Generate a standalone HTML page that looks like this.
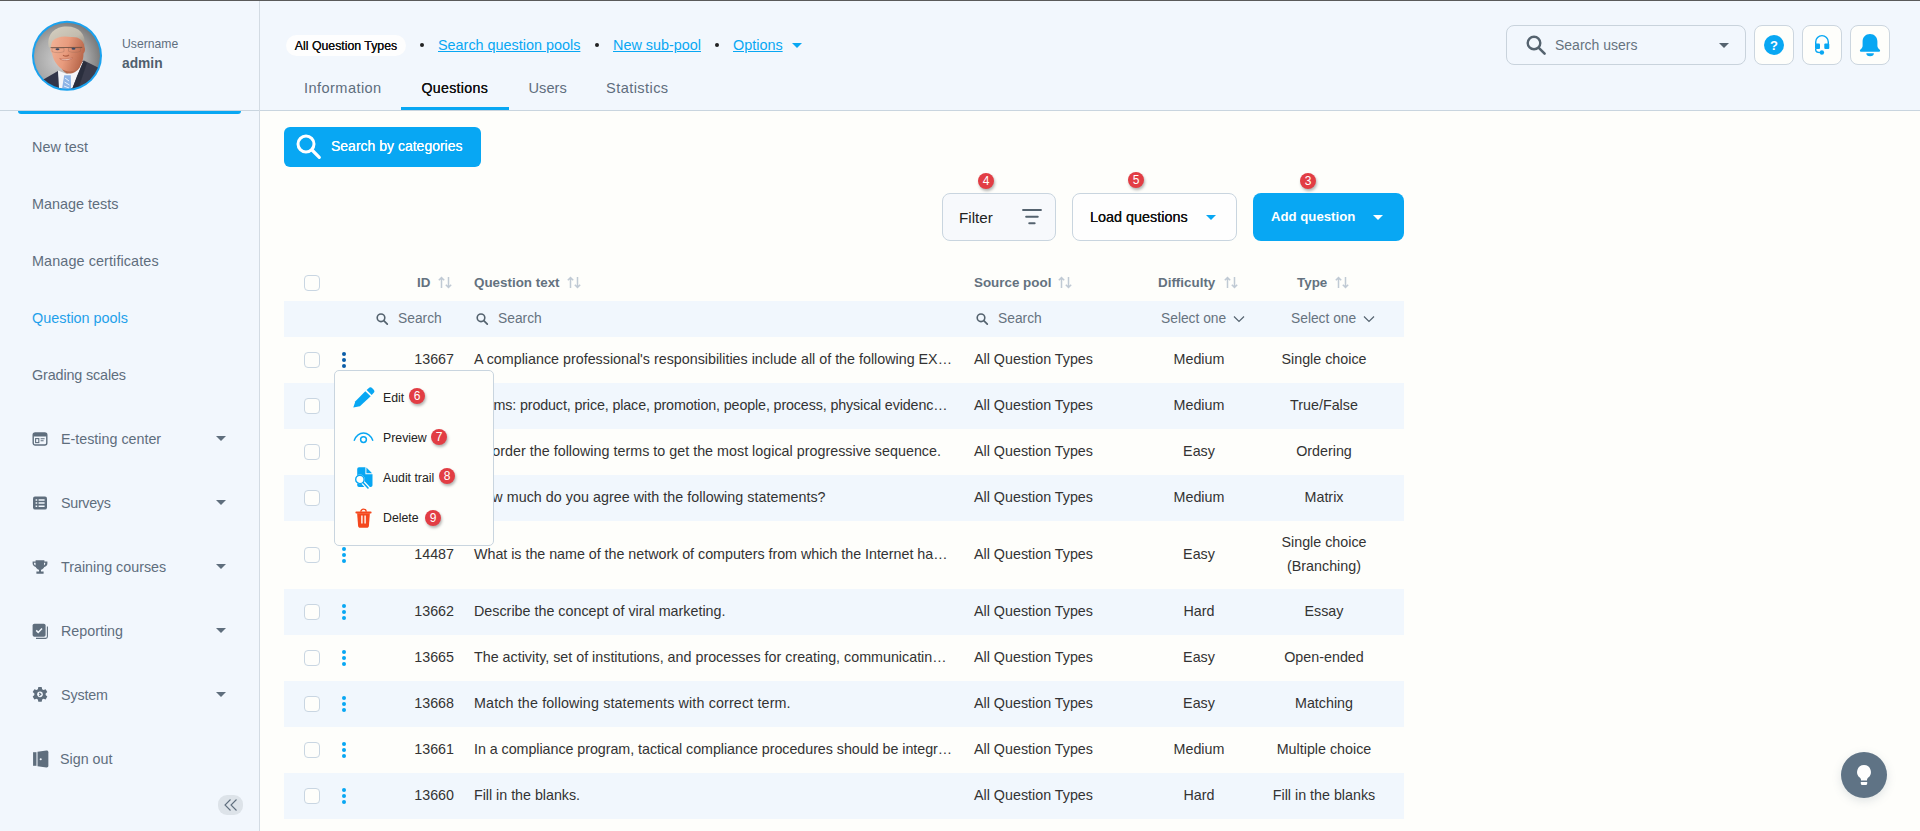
<!DOCTYPE html>
<html lang="en">
<head>
<meta charset="utf-8">
<title>Question pools</title>
<style>
*{box-sizing:border-box;margin:0;padding:0}
html,body{width:1920px;height:831px;overflow:hidden}
body{font-family:"Liberation Sans",sans-serif;font-size:14px;color:#333;background:#fefefb;position:relative}
.abs{position:absolute}
.topline{left:0;top:0;width:1920px;height:1px;background:#5a5a5a;z-index:50}
/* sidebar */
#side{left:0;top:0;width:260px;height:831px;background:#f2f7fd;border-right:1px solid #d3dbe3}
#head{left:260px;top:0;width:1660px;height:111px;background:#f2f7fd;border-bottom:1px solid #c9d5df}
#sidehead{left:0;top:0;width:259px;height:111px;border-bottom:1px solid #c9d5df}
.blueline{left:18px;top:111px;width:223px;height:3px;background:#08a7f3;border-radius:0 0 6px 6px}
.uname{left:122px;top:37px;font-size:12.2px;color:#5f6e7d;line-height:14px}
.admin{left:122px;top:56px;font-size:13.8px;font-weight:700;color:#505f6e;line-height:16px}
.mi{left:32px;font-size:14.4px;color:#5f6e7d;line-height:18px;white-space:nowrap}
.mi.act{color:#1fa0ea}
.gi{left:61px;font-size:14.3px;color:#5f6e7d;line-height:18px;white-space:nowrap}
.caret{width:0;height:0;border-left:5px solid transparent;border-right:5px solid transparent;border-top:5px solid #5f6e7d}
.ico{left:32px;width:16px;height:16px}
/* header */
.pill{left:286px;top:35px;width:120px;height:21px;background:#fefefe;border-radius:11px;font-size:12.3px;color:#111;text-align:center;line-height:23px;white-space:nowrap;text-shadow:0 0 .15px #111}
.bl{top:35px;font-size:14.4px;color:#08a7f3;text-decoration:underline;line-height:20px;white-space:nowrap}
.dot{top:43px;width:4px;height:4px;border-radius:50%;background:#222}
.tab{top:78px;font-size:14.6px;letter-spacing:.42px;color:#5f6e7d;line-height:20px;white-space:nowrap}
.tab.on{color:#111;text-shadow:0 0 .4px #111;font-size:14.2px;letter-spacing:.3px;margin-left:.5px}
.tabline{left:401px;top:107px;width:108px;height:3px;background:#08a7f3}
.sbox{left:1506px;top:25px;width:240px;height:40px;border:1px solid #c9d3dc;border-radius:8px;background:#f2f7fd}
.ibtn{top:25px;width:40px;height:40px;border:1px solid #ccd6df;border-radius:8px;background:#fefefb}
/* toolbar */
.sbc{left:284px;top:127px;width:197px;height:40px;background:#08a7f3;border-radius:6px;color:#fff;font-size:14px;text-shadow:0 0 .5px #fff}
.btn{top:193px;height:48px;border:1px solid #c9d5df;border-radius:8px;white-space:nowrap}
.badge{width:16px;height:16px;border-radius:50%;background:#e23d44;color:#fff;font-size:12px;line-height:16px;text-align:center;box-shadow:1px 2px 3px rgba(0,0,0,.3)}
/* table */
.cb{left:304px;width:16px;height:16px;border:1px solid #c9d6e2;border-radius:4px;background:#fefefb}
.th{top:274px;font-size:13.4px;font-weight:700;color:#64727f;line-height:18px;white-space:nowrap}
.row{left:284px;width:1120px;background:#f1f7fd}
.frow{left:284px;top:301px;width:1120px;height:36px;background:#f1f7fd}
.ft{top:310px;font-size:13.8px;color:#66737f;line-height:18px;white-space:nowrap}
.td{font-size:14.3px;color:#333;line-height:18px;white-space:nowrap}
.c{text-align:center}
.r{text-align:right}
.kb{left:341px;width:6px;height:18px}
/* popup */
#pop{left:334px;top:370px;width:160px;height:176px;background:#fefefb;border:1px solid #c9d5df;border-radius:5px;z-index:10}
.pi{left:47px;font-size:12.3px;color:#222;line-height:16px;white-space:nowrap}
</style>
</head>
<body>
<div class="abs" id="side"></div>
<div class="abs" id="head"></div>
<div class="abs" id="sidehead"></div>
<div class="abs topline"></div>
<!-- avatar -->
<svg class="abs" style="left:31px;top:20px" width="72" height="72" viewBox="0 0 72 72">
<defs><clipPath id="av"><circle cx="36" cy="35.800" r="33"/></clipPath>
<radialGradient id="avbg" cx=".42" cy=".55" r=".62"><stop offset="0" stop-color="#cfcfcf"/><stop offset=".55" stop-color="#a9a9a9"/><stop offset="1" stop-color="#6a6a6a"/></radialGradient>
<linearGradient id="skin" x1="0" y1="0" x2="1" y2=".3"><stop offset="0" stop-color="#f2b59a"/><stop offset=".55" stop-color="#e89b7d"/><stop offset="1" stop-color="#bb6a4e"/></linearGradient>
<linearGradient id="hair" x1="0" y1="0" x2="1" y2="1"><stop offset="0" stop-color="#d6d0c2"/><stop offset=".6" stop-color="#c3bcae"/><stop offset="1" stop-color="#8f897f"/></linearGradient>
<filter id="sf" x="-10%" y="-10%" width="120%" height="120%"><feGaussianBlur stdDeviation=".55"/></filter></defs>
<circle cx="36" cy="35.800" r="35" fill="#1aa2ef"/>
<g clip-path="url(#av)"><g filter="url(#sf)">
<rect width="72" height="72" fill="url(#avbg)"/>
<path d="M44 44L53 40.500 67 47.500 72 60V72H40Z" fill="#3b3e4d"/>
<path d="M8 62L27 51 30 72H6Z" fill="#33364a"/>
<path d="M27 50.500L36 54 52.500 41 46 56 41.500 68H28Z" fill="#f4f5f8"/>
<path d="M33.200 55.200H39.800L40 69H31Z" fill="#8db4e6"/>
<path d="M34 58l4 3M33.500 62l5 3M33 66l5 2" stroke="#e6f0fb" stroke-width="1"/>
<path d="M41.500 68L52.500 41 56 43 47 70Z" fill="#2c2f3d"/>
<path d="M30 44L50 38 49 47C46 52 41 54 37 53.500 33 53 30 49 30 44Z" fill="#b5694c"/>
<path d="M19.300 27C19 18 26 13 36 13S53 18 53.500 27C54.500 28.500 54.300 32 52.500 33.500 52.500 41 50 47 45 50 40.500 52.300 34.500 51.800 30.500 48.800 25 44.500 22 39.500 21 33 19.500 32 19 29 19.300 27Z" fill="url(#skin)"/>
<path d="M17.800 27C15.500 14 24 6.500 36 6.600 48 6.700 55 14 53.600 26 52 20 48 16.500 40 17 32 15.500 25 17 21.500 21 20.500 23 20 25.500 19.800 28.500Z" fill="url(#hair)"/>
<path d="M19.600 27.600L51.300 27.400" stroke="#5e463c" stroke-width=".9" opacity=".85"/>
<path d="M21 28.200h12v3.400c-3 1.400-9 1.400-12 0ZM37.500 27.900h12v3.400c-3 1.400-9 1.400-12 0Z" fill="none" stroke="#8a6050" stroke-width=".5" opacity=".6"/>
<ellipse cx="26.500" cy="29.300" rx="2" ry="1" fill="#3d4a66"/><ellipse cx="42.500" cy="28.800" rx="2" ry="1" fill="#3d4a66"/>
<path d="M32 35.200C34 36.400 36.500 36.200 38 35" stroke="#b05f45" stroke-width="1.100" fill="none"/>
<path d="M28.700 38.600C32 41.500 38.500 41 41.800 37.800 38 39.300 32.500 39.600 28.700 38.600Z" fill="#fbeee8" stroke="#b8604a" stroke-width=".6"/>
</g></g>
</svg>
<div class="abs uname">Username</div>
<div class="abs admin">admin</div>
<div class="abs blueline"></div>
<div class="abs mi" style="top:138px">New test</div>
<div class="abs mi" style="top:195px">Manage tests</div>
<div class="abs mi" style="top:252px;letter-spacing:.1px">Manage certificates</div>
<div class="abs mi act" style="top:309px">Question pools</div>
<div class="abs mi" style="top:366px;letter-spacing:-.15px">Grading scales</div>

<!-- group items -->
<svg class="abs ico" style="top:431px" viewBox="0 0 16 16"><rect x="1.2" y="2" width="13.6" height="12" rx="2" fill="none" stroke="#5f6e7d" stroke-width="1.4"/><rect x="1.2" y="2" width="13.6" height="3.4" rx="1.2" fill="#5f6e7d"/><rect x="3.6" y="7.6" width="3.2" height="4" fill="none" stroke="#5f6e7d" stroke-width="1.1"/><path d="M8.6 7.8h4M8.6 9.8h3" stroke="#5f6e7d" stroke-width="1.1"/></svg>
<div class="abs gi" style="top:430px">E-testing center</div>
<div class="abs caret" style="left:216px;top:436px"></div>

<svg class="abs ico" style="top:495px" viewBox="0 0 16 16"><rect x="1" y="1.6" width="14" height="13" rx="2" fill="#5f6e7d"/><path d="M3.6 5h1.6M3.6 8.1h1.6M3.6 11.2h1.6" stroke="#f2f7fd" stroke-width="1.5"/><path d="M6.6 5h6M6.6 8.1h6M6.6 11.2h6" stroke="#f2f7fd" stroke-width="1.5"/></svg>
<div class="abs gi" style="top:494px;letter-spacing:-.3px">Surveys</div>
<div class="abs caret" style="left:216px;top:500px"></div>

<svg class="abs ico" style="top:559px" viewBox="0 0 16 16"><path d="M3.600 1.200h8.800v1.200h3v2.200c0 1.800-1.300 3.200-3.100 3.400C11.600 9.500 10.400 10.500 9 10.800V12.400h2.600v2.400H4.400v-2.400H7V10.800C5.600 10.500 4.400 9.500 3.700 8 2.300 7.800 .6 6.400 .6 4.600V2.400h3Zm-1.600 2.600v.8c0 .8.500 1.500 1.300 1.800C3.600 6 3.600 5.500 3.600 5V3.800Zm11.200 0h-1.200V5c0 .5 0 1-.1 1.400.800-.300 1.300-1 1.300-1.800Z" fill="#5f6e7d"/></svg>
<div class="abs gi" style="top:558px">Training courses</div>
<div class="abs caret" style="left:216px;top:564px"></div>

<svg class="abs ico" style="top:623px" viewBox="0 0 16 16"><path d="M15.400 3.600v10c0 1-.8 1.800-1.800 1.800H4" fill="none" stroke="#5f6e7d" stroke-width="1.1"/><rect x=".6" y=".8" width="13" height="13" rx="1.800" fill="#5f6e7d"/><path d="M4.200 7.400l2 2 3.800-4" stroke="#f2f7fd" stroke-width="1.500" fill="none"/></svg>
<div class="abs gi" style="top:622px">Reporting</div>
<div class="abs caret" style="left:216px;top:628px"></div>

<svg class="abs ico" style="top:686px;left:31px;width:18px;height:18px" viewBox="0 0 16 16"><path d="M6.500.800h3l.4 2 1.200.7 1.900-.7 1.500 2.600-1.500 1.300v1.400l1.500 1.300-1.500 2.600-1.900-.7-1.200.7-.4 2h-3l-.4-2-1.200-.7-1.900.7L1.500 9.400 3 8.100V6.700L1.500 5.400 3 2.800l1.900.7 1.200-.7Z" fill="#5f6e7d"/><circle cx="8" cy="7.400" r="2.500" fill="#f2f7fd"/><path d="M7.300 6.200l1.400 1.200-1.400 1.200" stroke="#5f6e7d" stroke-width="1.100" fill="none"/></svg>
<div class="abs gi" style="top:686px;letter-spacing:-.15px">System</div>
<div class="abs caret" style="left:216px;top:692px"></div>

<svg class="abs ico" style="top:750px;width:17px;height:18px" viewBox="0 0 16 18" preserveAspectRatio="none"><path d="M1 2.200h3.200v13.600H1Z" fill="#5f6e7d"/><path d="M5.200 1.800l8.400-1.200c1-.1 1.800.6 1.800 1.600v13.600c0 1-.8 1.700-1.800 1.600l-8.400-1.200Z" fill="#5f6e7d"/><circle cx="8.200" cy="9.200" r="1" fill="#f2f7fd"/></svg>
<div class="abs gi" style="left:60px;top:750px">Sign out</div>

<div class="abs" style="left:218px;top:795px;width:25px;height:20px;border-radius:9px;background:#dde3e9"></div>
<svg class="abs" style="left:223px;top:798px" width="16" height="14" viewBox="0 0 16 14"><path d="M7.500 1.500L2 7l5.500 5.500M13.500 1.500L8 7l5.500 5.500" stroke="#5f6e7d" stroke-width="1.100" fill="none"/></svg>

<div class="abs pill">All Question Types</div>
<div class="abs dot" style="left:420px"></div>
<div class="abs bl" style="left:438px">Search question pools</div>
<div class="abs dot" style="left:595px"></div>
<div class="abs bl" style="left:613px">New sub-pool</div>
<div class="abs dot" style="left:715px"></div>
<div class="abs bl" style="left:733px">Options</div>
<div class="abs caret" style="left:792px;top:43px;border-top-color:#08a7f3"></div>
<div class="abs tab" style="left:304px">Information</div>
<div class="abs tab on" style="left:421px">Questions</div>
<div class="abs tab" style="left:528.500px;letter-spacing:.05px">Users</div>
<div class="abs tab" style="left:606px">Statistics</div>
<div class="abs tabline"></div>

<div class="abs sbox"></div>
<svg class="abs" style="left:1525px;top:34px" width="22" height="22" viewBox="0 0 22 22"><circle cx="9" cy="9" r="6.300" fill="none" stroke="#55636f" stroke-width="2.400"/><path d="M13.800 13.800L19.600 19.600" stroke="#55636f" stroke-width="2.600" stroke-linecap="round"/></svg>
<div class="abs" style="left:1555px;top:35px;font-size:14px;color:#66737f;line-height:20px;white-space:nowrap">Search users</div>
<div class="abs caret" style="left:1719px;top:42.500px;border-top-color:#55636f"></div>

<div class="abs ibtn" style="left:1754px"></div>
<div class="abs ibtn" style="left:1802px"></div>
<div class="abs ibtn" style="left:1850px"></div>
<!-- help -->
<div class="abs" style="left:1764px;top:35px;width:20px;height:20px;border-radius:50%;background:#08a7f3;color:#fff;font-size:13px;font-weight:700;line-height:21px;text-align:center">?</div>
<!-- headset -->
<svg class="abs" style="left:1812px;top:33px" width="20" height="24" viewBox="0 0 20 24"><path d="M3.700 11.500V8.900a6.300 6.300 0 0 1 12.600 0V11.500" fill="none" stroke="#08a7f3" stroke-width="1.400"/><rect x="3" y="10.400" width="5" height="5.600" rx="1" fill="#08a7f3"/><rect x="12.300" y="10.400" width="5" height="5.600" rx="1" fill="#08a7f3"/><path d="M3.700 15.500v1.200c0 1.800 2 2.800 4.500 2.800" fill="none" stroke="#08a7f3" stroke-width="1.400"/><circle cx="9.900" cy="19.500" r="2.200" fill="#08a7f3"/></svg>
<!-- bell -->
<svg class="abs" style="left:1859px;top:33px" width="22" height="24" viewBox="0 0 22 24"><path d="M11 1C6.500 1 3.600 4.200 3.600 8.600V13C3.600 14.500 2.500 15.800 1.200 16.800C.6 17.300 .9 18.700 1.900 18.700H20.100C21.100 18.700 21.400 17.300 20.800 16.800C19.500 15.800 18.400 14.500 18.400 13V8.600C18.400 4.200 15.500 1 11 1Z" fill="#08a7f3"/><path d="M7.300 20.200H14.900A3.800 3 0 0 1 7.300 20.200Z" fill="#08a7f3"/></svg>
<div class="abs sbc"></div>
<svg class="abs" style="left:295px;top:133px" width="27" height="27" viewBox="0 0 27 27"><circle cx="11" cy="11" r="8" fill="none" stroke="#fff" stroke-width="3"/><path d="M17 17L24.300 24.300" stroke="#fff" stroke-width="3.200" stroke-linecap="round"/></svg>
<div class="abs" style="left:331px;top:137px;font-size:14px;color:#fff;line-height:18px;white-space:nowrap;text-shadow:0 0 .6px #fff">Search by categories</div>

<div class="abs btn" style="left:942px;width:114px;background:#f7f9fc"></div>
<div class="abs" style="left:959px;top:208px;font-size:15.200px;color:#222;line-height:20px">Filter</div>
<svg class="abs" style="left:1020px;top:207px" width="24" height="20" viewBox="0 0 24 20"><path d="M3.100 3h17.800M6.200 9.800h11.500M9.300 16.300h5.300" stroke="#55636f" stroke-width="2.100" stroke-linecap="round"/></svg>

<div class="abs btn" style="left:1072px;width:165px;background:#fefefe"></div>
<div class="abs" style="left:1090px;top:208px;font-size:14.400px;color:#111;line-height:18px;white-space:nowrap;text-shadow:0 0 .3px #111">Load questions</div>
<div class="abs caret" style="left:1206px;top:215px;border-top-color:#08a7f3"></div>

<div class="abs" style="left:1253px;top:193px;width:151px;height:48px;border-radius:8px;background:#08a7f3"></div>
<div class="abs" style="left:1271px;top:208px;font-size:13.200px;font-weight:700;color:#fff;line-height:18px;white-space:nowrap">Add question</div>
<div class="abs caret" style="left:1373px;top:215px;border-top-color:#fff"></div>

<div class="abs badge" style="left:978px;top:173px">4</div>
<div class="abs badge" style="left:1128px;top:172px">5</div>
<div class="abs badge" style="left:1300px;top:173px">3</div>

<div class="abs cb" style="top:275px"></div>
<div class="abs th" style="left:417px">ID</div>
<div class="abs th" style="left:474px">Question text</div>
<div class="abs th" style="left:974px">Source pool</div>
<div class="abs th" style="left:1158px">Difficulty</div>
<div class="abs th" style="left:1297px">Type</div>
<svg class="abs" style="left:438px;top:276px" width="15" height="13" viewBox="0 0 15 13"><path d="M3.500 12V1.500M.800 4.200L3.500 1.500 6.200 4.200M10.500 1v10.500M7.800 8.800l2.700 2.700 2.700-2.700" stroke="#c0cad4" stroke-width="1.500" fill="none"/></svg>
<svg class="abs" style="left:567px;top:276px" width="15" height="13" viewBox="0 0 15 13"><path d="M3.500 12V1.500M.800 4.200L3.500 1.500 6.200 4.200M10.500 1v10.500M7.800 8.800l2.700 2.700 2.700-2.700" stroke="#c0cad4" stroke-width="1.500" fill="none"/></svg>
<svg class="abs" style="left:1058px;top:276px" width="15" height="13" viewBox="0 0 15 13"><path d="M3.500 12V1.500M.800 4.200L3.500 1.500 6.200 4.200M10.500 1v10.500M7.800 8.800l2.700 2.700 2.700-2.700" stroke="#c0cad4" stroke-width="1.500" fill="none"/></svg>
<svg class="abs" style="left:1224px;top:276px" width="15" height="13" viewBox="0 0 15 13"><path d="M3.500 12V1.500M.800 4.200L3.500 1.500 6.200 4.200M10.500 1v10.500M7.800 8.800l2.700 2.700 2.700-2.700" stroke="#c0cad4" stroke-width="1.500" fill="none"/></svg>
<svg class="abs" style="left:1335px;top:276px" width="15" height="13" viewBox="0 0 15 13"><path d="M3.500 12V1.500M.800 4.200L3.500 1.500 6.200 4.200M10.500 1v10.500M7.800 8.800l2.700 2.700 2.700-2.700" stroke="#c0cad4" stroke-width="1.500" fill="none"/></svg>
<div class="abs frow"></div>
<svg class="abs" style="left:375px;top:312px" width="14" height="14" viewBox="0 0 14 14"><circle cx="6" cy="5.800" r="3.800" fill="none" stroke="#55636f" stroke-width="1.600"/><path d="M8.800 8.600l3.500 3.500" stroke="#55636f" stroke-width="1.700" stroke-linecap="round"/></svg>
<svg class="abs" style="left:475px;top:312px" width="14" height="14" viewBox="0 0 14 14"><circle cx="6" cy="5.800" r="3.800" fill="none" stroke="#55636f" stroke-width="1.600"/><path d="M8.800 8.600l3.500 3.500" stroke="#55636f" stroke-width="1.700" stroke-linecap="round"/></svg>
<svg class="abs" style="left:975px;top:312px" width="14" height="14" viewBox="0 0 14 14"><circle cx="6" cy="5.800" r="3.800" fill="none" stroke="#55636f" stroke-width="1.600"/><path d="M8.800 8.600l3.500 3.500" stroke="#55636f" stroke-width="1.700" stroke-linecap="round"/></svg>
<div class="abs ft" style="left:398px">Search</div>
<div class="abs ft" style="left:498px">Search</div>
<div class="abs ft" style="left:998px">Search</div>
<div class="abs ft" style="left:1161px">Select one</div>
<svg class="abs" style="left:1233px;top:315px" width="12" height="8" viewBox="0 0 12 8"><path d="M1 1.500l5 5 5-5" stroke="#55636f" stroke-width="1.200" fill="none"/></svg>
<div class="abs ft" style="left:1291px">Select one</div>
<svg class="abs" style="left:1363px;top:315px" width="12" height="8" viewBox="0 0 12 8"><path d="M1 1.500l5 5 5-5" stroke="#55636f" stroke-width="1.200" fill="none"/></svg>
<div class="abs cb" style="top:352px"></div>
<svg class="abs kb" style="top:351px" viewBox="0 0 6 18"><circle cx="3" cy="3" r="2" fill="#0b5ea8"/><circle cx="3" cy="9" r="2" fill="#0b5ea8"/><circle cx="3" cy="15" r="2" fill="#0b5ea8"/></svg>
<div class="abs td r" style="left:394px;width:60px;top:350px">13667</div>
<div class="abs td" style="left:474px;top:350px;letter-spacing:0.0px">A compliance professional's responsibilities include all of the following EX…</div>
<div class="abs td" style="left:974px;top:350px">All Question Types</div>
<div class="abs td c" style="left:1139px;width:120px;top:350px">Medium</div>
<div class="abs td c" style="left:1254px;width:140px;top:350px">Single choice</div>
<div class="abs row" style="top:383px;height:46px"></div>
<div class="abs cb" style="top:398px"></div>
<svg class="abs kb" style="top:397px" viewBox="0 0 6 18"><circle cx="3" cy="3" r="2" fill="#08a7f3"/><circle cx="3" cy="9" r="2" fill="#08a7f3"/><circle cx="3" cy="15" r="2" fill="#08a7f3"/></svg>
<div class="abs td r" style="left:394px;width:60px;top:396px">13666</div>
<div class="abs td" style="left:474px;top:396px;letter-spacing:-0.13px">Terms: product, price, place, promotion, people, process, physical evidenc…</div>
<div class="abs td" style="left:974px;top:396px">All Question Types</div>
<div class="abs td c" style="left:1139px;width:120px;top:396px">Medium</div>
<div class="abs td c" style="left:1254px;width:140px;top:396px">True/False</div>
<div class="abs cb" style="top:444px"></div>
<svg class="abs kb" style="top:443px" viewBox="0 0 6 18"><circle cx="3" cy="3" r="2" fill="#08a7f3"/><circle cx="3" cy="9" r="2" fill="#08a7f3"/><circle cx="3" cy="15" r="2" fill="#08a7f3"/></svg>
<div class="abs td r" style="left:394px;width:60px;top:442px">13664</div>
<div class="abs td" style="left:474px;top:442px;letter-spacing:0.018px">Reorder the following terms to get the most logical progressive sequence.</div>
<div class="abs td" style="left:974px;top:442px">All Question Types</div>
<div class="abs td c" style="left:1139px;width:120px;top:442px">Easy</div>
<div class="abs td c" style="left:1254px;width:140px;top:442px">Ordering</div>
<div class="abs row" style="top:475px;height:46px"></div>
<div class="abs cb" style="top:490px"></div>
<svg class="abs kb" style="top:489px" viewBox="0 0 6 18"><circle cx="3" cy="3" r="2" fill="#08a7f3"/><circle cx="3" cy="9" r="2" fill="#08a7f3"/><circle cx="3" cy="15" r="2" fill="#08a7f3"/></svg>
<div class="abs td r" style="left:394px;width:60px;top:488px">13663</div>
<div class="abs td" style="left:474px;top:488px;letter-spacing:0.037px">How much do you agree with the following statements?</div>
<div class="abs td" style="left:974px;top:488px">All Question Types</div>
<div class="abs td c" style="left:1139px;width:120px;top:488px">Medium</div>
<div class="abs td c" style="left:1254px;width:140px;top:488px">Matrix</div>
<div class="abs cb" style="top:547px"></div>
<svg class="abs kb" style="top:546px" viewBox="0 0 6 18"><circle cx="3" cy="3" r="2" fill="#08a7f3"/><circle cx="3" cy="9" r="2" fill="#08a7f3"/><circle cx="3" cy="15" r="2" fill="#08a7f3"/></svg>
<div class="abs td r" style="left:394px;width:60px;top:545px">14487</div>
<div class="abs td" style="left:474px;top:545px;letter-spacing:-0.025px">What is the name of the network of computers from which the Internet ha…</div>
<div class="abs td" style="left:974px;top:545px">All Question Types</div>
<div class="abs td c" style="left:1139px;width:120px;top:545px">Easy</div>
<div class="abs td c" style="left:1254px;width:140px;top:530px;line-height:24px">Single choice<br>(Branching)</div>
<div class="abs row" style="top:589px;height:46px"></div>
<div class="abs cb" style="top:604px"></div>
<svg class="abs kb" style="top:603px" viewBox="0 0 6 18"><circle cx="3" cy="3" r="2" fill="#08a7f3"/><circle cx="3" cy="9" r="2" fill="#08a7f3"/><circle cx="3" cy="15" r="2" fill="#08a7f3"/></svg>
<div class="abs td r" style="left:394px;width:60px;top:602px">13662</div>
<div class="abs td" style="left:474px;top:602px;letter-spacing:0.01px">Describe the concept of viral marketing.</div>
<div class="abs td" style="left:974px;top:602px">All Question Types</div>
<div class="abs td c" style="left:1139px;width:120px;top:602px">Hard</div>
<div class="abs td c" style="left:1254px;width:140px;top:602px">Essay</div>
<div class="abs cb" style="top:650px"></div>
<svg class="abs kb" style="top:649px" viewBox="0 0 6 18"><circle cx="3" cy="3" r="2" fill="#08a7f3"/><circle cx="3" cy="9" r="2" fill="#08a7f3"/><circle cx="3" cy="15" r="2" fill="#08a7f3"/></svg>
<div class="abs td r" style="left:394px;width:60px;top:648px">13665</div>
<div class="abs td" style="left:474px;top:648px;letter-spacing:0.0px">The activity, set of institutions, and processes for creating, communicatin…</div>
<div class="abs td" style="left:974px;top:648px">All Question Types</div>
<div class="abs td c" style="left:1139px;width:120px;top:648px">Easy</div>
<div class="abs td c" style="left:1254px;width:140px;top:648px">Open-ended</div>
<div class="abs row" style="top:681px;height:46px"></div>
<div class="abs cb" style="top:696px"></div>
<svg class="abs kb" style="top:695px" viewBox="0 0 6 18"><circle cx="3" cy="3" r="2" fill="#08a7f3"/><circle cx="3" cy="9" r="2" fill="#08a7f3"/><circle cx="3" cy="15" r="2" fill="#08a7f3"/></svg>
<div class="abs td r" style="left:394px;width:60px;top:694px">13668</div>
<div class="abs td" style="left:474px;top:694px;letter-spacing:0.139px">Match the following statements with correct term.</div>
<div class="abs td" style="left:974px;top:694px">All Question Types</div>
<div class="abs td c" style="left:1139px;width:120px;top:694px">Easy</div>
<div class="abs td c" style="left:1254px;width:140px;top:694px">Matching</div>
<div class="abs cb" style="top:742px"></div>
<svg class="abs kb" style="top:741px" viewBox="0 0 6 18"><circle cx="3" cy="3" r="2" fill="#08a7f3"/><circle cx="3" cy="9" r="2" fill="#08a7f3"/><circle cx="3" cy="15" r="2" fill="#08a7f3"/></svg>
<div class="abs td r" style="left:394px;width:60px;top:740px">13661</div>
<div class="abs td" style="left:474px;top:740px;letter-spacing:-0.049px">In a compliance program, tactical compliance procedures should be integr…</div>
<div class="abs td" style="left:974px;top:740px">All Question Types</div>
<div class="abs td c" style="left:1139px;width:120px;top:740px">Medium</div>
<div class="abs td c" style="left:1254px;width:140px;top:740px">Multiple choice</div>
<div class="abs row" style="top:773px;height:46px"></div>
<div class="abs cb" style="top:788px"></div>
<svg class="abs kb" style="top:787px" viewBox="0 0 6 18"><circle cx="3" cy="3" r="2" fill="#08a7f3"/><circle cx="3" cy="9" r="2" fill="#08a7f3"/><circle cx="3" cy="15" r="2" fill="#08a7f3"/></svg>
<div class="abs td r" style="left:394px;width:60px;top:786px">13660</div>
<div class="abs td" style="left:474px;top:786px;letter-spacing:-0.025px">Fill in the blanks.</div>
<div class="abs td" style="left:974px;top:786px">All Question Types</div>
<div class="abs td c" style="left:1139px;width:120px;top:786px">Hard</div>
<div class="abs td c" style="left:1254px;width:140px;top:786px">Fill in the blanks</div>

<div class="abs" id="pop"><div class="abs" style="left:1px;top:1px;width:1px;height:1px">
<svg class="abs" style="left:16px;top:15px" width="23" height="22" viewBox="0 0 23 22"><path d="M1.300 20.500L3.400 14.200 13.300 4.300 18.700 9.300 7.900 19.200Z" fill="#08a7f3"/><path d="M14.600 3.100l2-1.900a2.600 2.600 0 0 1 3.700 0l1.200 1.200a2.600 2.600 0 0 1 0 3.700L19.700 8Z" fill="#08a7f3"/></svg>
<div class="abs pi" style="left:47px;top:18px">Edit</div>
<div class="abs badge" style="left:73px;top:16px">6</div>
<svg class="abs" style="left:17px;top:56px" width="21" height="18" viewBox="0 0 21 18"><path d="M1.300 12.300C3.500 7.200 7 5.100 10.500 5.100S17.500 7.200 19.700 12.300" fill="none" stroke="#08a7f3" stroke-width="1.500" stroke-linecap="round"/><circle cx="10.500" cy="11.600" r="2.900" fill="none" stroke="#08a7f3" stroke-width="1.500"/></svg>
<div class="abs pi" style="left:47px;top:58px">Preview</div>
<div class="abs badge" style="left:95px;top:57px">7</div>
<svg class="abs" style="left:17px;top:94px" width="22" height="24" viewBox="0 0 22 24"><path d="M6 1.200H12.400V8.300H19.500V19.300a1.800 1.800 0 0 1-1.800 1.800H6a1.800 1.800 0 0 1-1.800-1.800V3A1.800 1.800 0 0 1 6 1.200Z" fill="#08a7f3"/><path d="M13.400 1.600L19.100 7.300H13.400Z" fill="#08a7f3"/><circle cx="6.900" cy="13.400" r="4.900" fill="#fefefb"/><path d="M10.100 16.600L15.200 22.200" stroke="#fefefb" stroke-width="4" stroke-linecap="round"/><circle cx="6.900" cy="13.400" r="4.200" fill="#fefefb" stroke="#08a7f3" stroke-width="1.400"/><path d="M10 16.500L15 22" stroke="#08a7f3" stroke-width="1.600" stroke-linecap="round"/></svg>
<div class="abs pi" style="left:47px;top:98px">Audit trail</div>
<div class="abs badge" style="left:103px;top:96px">8</div>
<svg class="abs" style="left:18px;top:134px" width="20" height="24" viewBox="0 0 20 24"><path d="M6.800 5.800a2.700 2.700 0 0 1 5.400 0" fill="none" stroke="#f4481e" stroke-width="1.400"/><rect x="1.400" y="5.500" width="16.200" height="1.900" rx=".9" fill="#f4481e"/><path d="M3.100 7.300H15.900L14.900 19.900c-.1 1.100-.9 1.900-2 1.900H6.100c-1.100 0-1.900-.8-2-1.900Z" fill="#f4481e"/><path d="M7.900 9.600v7.800M11.100 9.600v7.800" stroke="#fefefb" stroke-width="1.400"/></svg>
<div class="abs pi" style="left:47px;top:138px">Delete</div>
<div class="abs badge" style="left:89px;top:138px">9</div>
</div></div>
</div>

<div class="abs" style="left:1841px;top:752px;width:46px;height:46px;border-radius:50%;background:#5f7385;box-shadow:0 3px 10px rgba(90,110,130,.18)"></div>
<svg class="abs" style="left:1855px;top:764px" width="18" height="22" viewBox="0 0 18 22"><path d="M9 1a7 7 0 0 0-4 12.700c.600.500 1 1.200 1 2V16.500h6v-.8c0-.8.400-1.500 1-2A7 7 0 0 0 9 1Z" fill="#fefefe"/><path d="M5.800 18h6.400v1.500c0 .8-.6 1.500-1.400 1.500H7.200c-.8 0-1.400-.7-1.400-1.500Z" fill="#fefefe"/></svg>

</body>
</html>
